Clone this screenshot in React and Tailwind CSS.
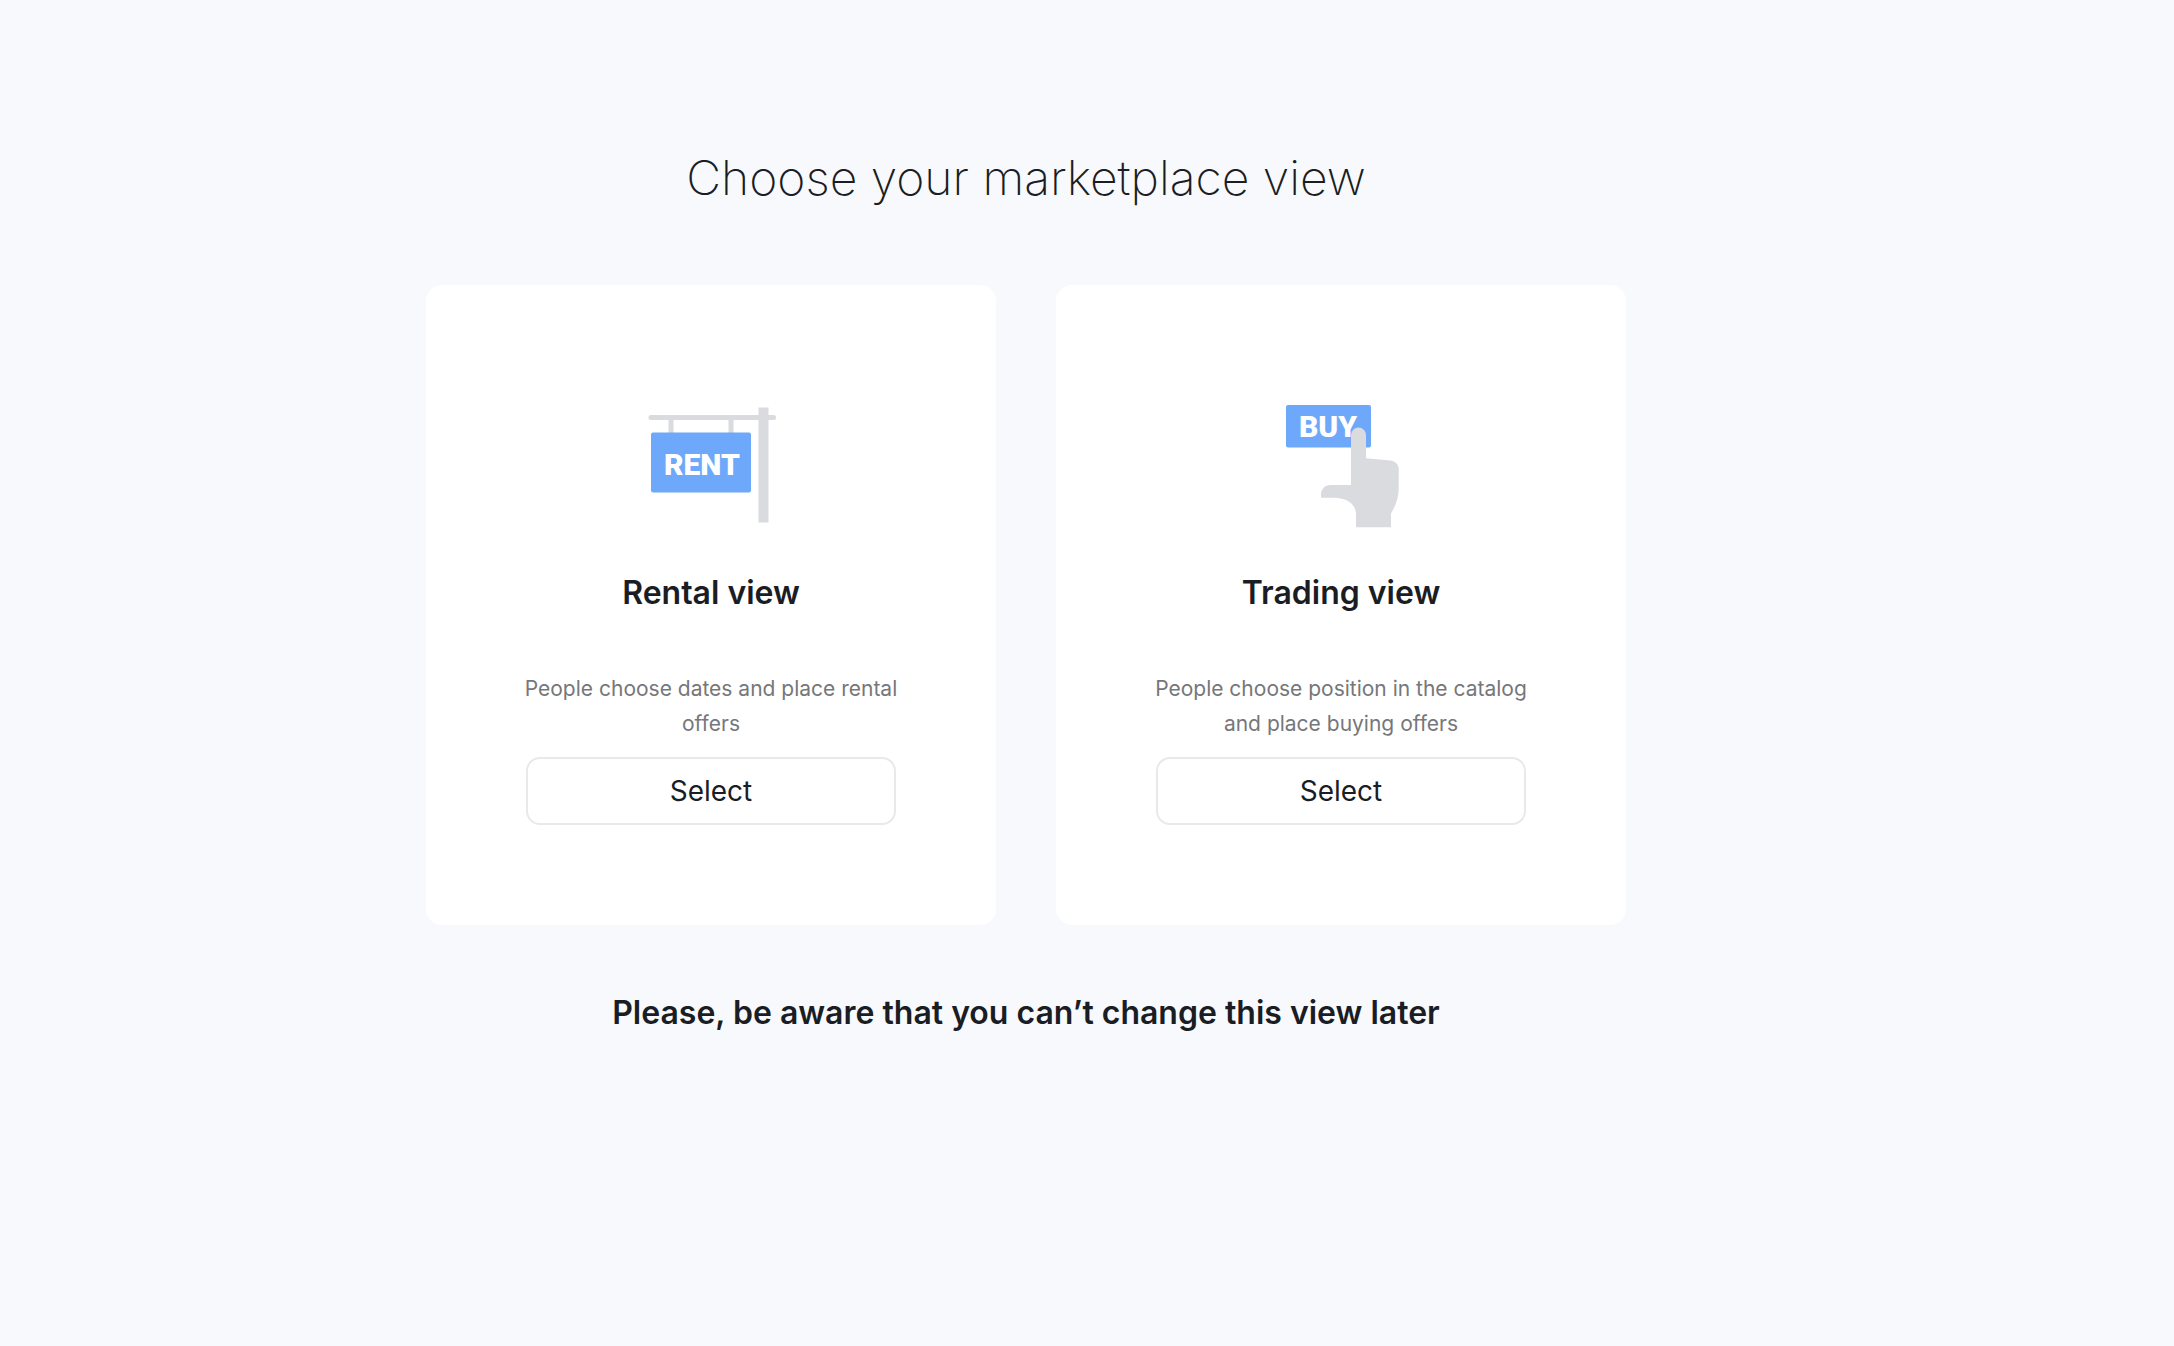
function RentIcon() {
  return (
    <svg className="size-40" viewBox="0 0 160 160" aria-hidden="true">
      <g fill="#dadbdf">
        <rect x="37.5" y="33" width="5" height="16" />
        <rect x="97.5" y="33" width="5" height="16" />
        <rect x="17.5" y="30" width="127.5" height="5" rx="2.5" />
        <rect x="127.5" y="22.5" width="10" height="115" />
      </g>
      <rect x="20" y="47.5" width="100" height="60" rx="2" fill="#6ea8fa" />
      <text x="33" y="90" fill="#fff" fontSize="30" fontWeight="900" fontFamily="Roboto, sans-serif">RENT</text>
    </svg>
  );
}

function BuyIcon() {
  return (
    <svg className="size-40" viewBox="0 0 160 160" aria-hidden="true">
      <rect x="25" y="20" width="85" height="42.5" rx="2" fill="#6ea8fa" />
      <text x="38" y="52" fill="#fff" fontSize="30" fontWeight="900" fontFamily="Roboto, sans-serif">BUY</text>
      <path
        fill="#dadbdf"
        d="M90 50a7.5 7.5 0 0 1 15 0V73.2l24.5 2.3c4.8.5 8.2 4 8.2 8.5v18.5c0 11-3 17.5-7.7 26v13.8H95v-13.3c0-9-7.500-16.300-23-16.300H60v-3c0-5.500 4-9.700 9.500-9.700H90z"
      />
    </svg>
  );
}

const views = [
  { title: "Rental view", text: "People choose dates and place rental offers", Icon: RentIcon },
  { title: "Trading view", text: "People choose position in the catalog and place buying offers", Icon: BuyIcon },
];

export default function App() {
  return (
    <div className="min-h-screen bg-[#f8f9fd] pr-[122px] font-[Inter,sans-serif] text-[#1a1d23]">
      <main className="mx-auto flex max-w-[1200px] flex-col items-center pt-[142px] text-center">
        <h1 className="text-[48px] leading-[72px] font-[150]">Choose your marketplace view</h1>
        <div className="mt-[71px] grid w-full grid-cols-2 gap-[60px]">
          {views.map(({ title, text, Icon }) => (
            <section key={title} className="flex flex-col items-center rounded-2xl bg-white p-[100px]">
              <Icon />
              <h2 className="mt-6 text-[32px] leading-[48px] font-semibold">{title}</h2>
              <p className="-mx-1 mt-[54px] text-[21px] leading-[35px] text-[#76777a]">{text}</p>
              <button
                type="button"
                aria-label={`Select ${title}`}
                className="mt-4 h-[68px] w-full cursor-pointer rounded-[14px] border-2 border-[#e7e9ec] bg-white text-[28px]"
              >
                Select
              </button>
            </section>
          ))}
        </div>
        <p className="mt-16 text-[32px] leading-[48px] font-semibold">
          Please, be aware that you can’t change this view later
        </p>
      </main>
    </div>
  );
}
